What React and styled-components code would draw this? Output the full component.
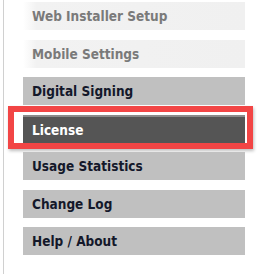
import React from "react";
import styled, { createGlobalStyle } from "styled-components";

const GlobalStyle = createGlobalStyle`
  body {
    margin: 0;
    background: #ffffff;
    font-family: "DejaVu Sans Condensed", "DejaVu Sans", Tahoma, sans-serif;
  }
`;

const Sidebar = styled.div`
  margin-left: 3px;
  border-left: 1px solid #d0d0d0;
  padding: 2px 0 20px 19px;
  width: 222px;
  display: flex;
  flex-direction: column;
  gap: 9.5px;
`;

const Item = styled.div`
  position: relative;
  height: 28px;
  display: flex;
  align-items: center;
  padding-left: 9px;
  font-size: 13.5px;
  font-weight: bold;
  font-stretch: condensed;
  box-sizing: border-box;
  color: ${(p) =>
    p.$variant === "muted" ? "#7a7a7a" : p.$variant === "active" ? "#ffffff" : "#14182a"};
  background: ${(p) =>
    p.$variant === "muted"
      ? "linear-gradient(to right, #ffffff 0%, #f2f2f2 6%, #f0f0f0 100%)"
      : p.$variant === "active"
      ? "#555555"
      : "#c0c0c0"};
  border-top: ${(p) => (p.$variant === "active" ? "2px solid #8a8a8a" : "none")};

  ${(p) =>
    p.$highlight &&
    `
    &::after {
      content: "";
      position: absolute;
      left: -15px;
      right: -8px;
      top: -10.5px;
      bottom: -6.5px;
      border: 6px solid #f24545;
      box-shadow: 1px 2px 3px rgba(0, 0, 0, 0.25);
      pointer-events: none;
    }
  `}
`;

const items = [
  { label: "Web Installer Setup", variant: "muted" },
  { label: "Mobile Settings", variant: "muted" },
  { label: "Digital Signing" },
  { label: "License", variant: "active", highlight: true },
  { label: "Usage Statistics" },
  { label: "Change Log" },
  { label: "Help / About" },
];

export default function App() {
  return (
    <>
      <GlobalStyle />
      <Sidebar>
        {items.map((it) => (
          <Item key={it.label} $variant={it.variant} $highlight={it.highlight}>
            {it.label}
          </Item>
        ))}
      </Sidebar>
    </>
  );
}
